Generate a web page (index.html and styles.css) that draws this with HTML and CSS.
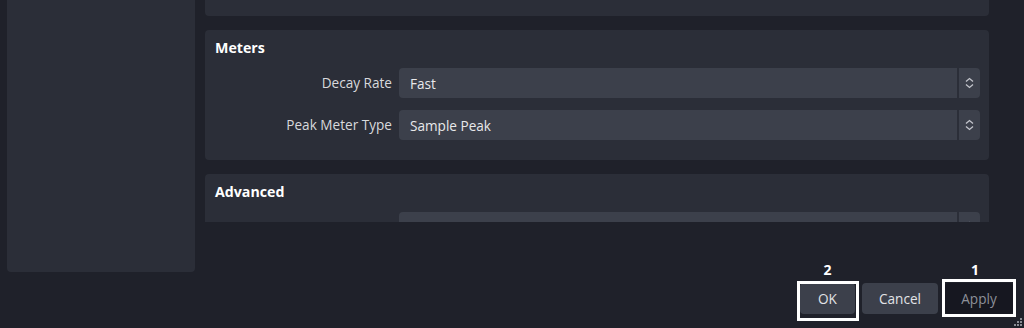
FILE: index.html
```html
<!DOCTYPE html>
<html>
<head>
<meta charset="utf-8">
<link rel="stylesheet" href="styles.css">
</head>
<body>
<div class="dialog">
  <div class="main">
    <div class="sidebar"></div>
    <div class="scroll">
      <div class="card partial"></div>
      <div class="card">
        <div class="card-title">Meters</div>
        <div class="form">
          <div class="label">Decay Rate</div>
          <div class="combo"><div class="combo-main">Fast</div><div class="combo-arrow"><svg width="9" height="12" viewBox="0 0 9 12"><path d="M1 4.5 L4.5 1.5 L8 4.5 M1 7.5 L4.5 10.5 L8 7.5" fill="none" stroke="#c3c5cc" stroke-width="1.3"/></svg></div></div>
          <div class="label">Peak Meter Type</div>
          <div class="combo"><div class="combo-main">Sample Peak</div><div class="combo-arrow"><svg width="9" height="12" viewBox="0 0 9 12"><path d="M1 4.5 L4.5 1.5 L8 4.5 M1 7.5 L4.5 10.5 L8 7.5" fill="none" stroke="#c3c5cc" stroke-width="1.3"/></svg></div></div>
        </div>
      </div>
      <div class="card">
        <div class="card-title">Advanced</div>
        <div class="form">
          <div class="label">Monitoring Device</div>
          <div class="combo"><div class="combo-main">Default</div><div class="combo-arrow"><svg width="9" height="12" viewBox="0 0 9 12"><path d="M1 4.5 L4.5 1.5 L8 4.5 M1 7.5 L4.5 10.5 L8 7.5" fill="none" stroke="#c3c5cc" stroke-width="1.3"/></svg></div></div>
        </div>
      </div>
    </div>
  </div>
  <div class="buttons">
    <div class="annot annot-ok">
      <button class="btn btn-ok">OK</button>
      <span class="annot-num">2</span>
    </div>
    <button class="btn btn-cancel">Cancel</button>
    <div class="annot annot-apply">
      <button class="btn btn-apply" disabled>Apply</button>
      <span class="annot-num">1</span>
    </div>
  </div>
  <svg class="grip" width="10" height="9" viewBox="0 0 10 9">
    <rect x="8" y="0" width="2" height="2" fill="#8a8c94"/>
    <rect x="5" y="3" width="2" height="2" fill="#8a8c94"/>
    <rect x="8" y="3" width="2" height="2" fill="#8a8c94"/>
    <rect x="2" y="6" width="2" height="2" fill="#8a8c94"/>
    <rect x="5" y="6" width="2" height="2" fill="#8a8c94"/>
    <rect x="8" y="6" width="2" height="2" fill="#8a8c94"/>
  </svg>
</div>
</body>
</html>
```
FILE: styles.css
```css
html, body {
  margin: 0;
  padding: 0;
}
body {
  background: #1f212a;
  font-family: "Open Sans", "Noto Sans", sans-serif;
  font-size: 13.6px;
  color: #dcdde0;
  width: 1024px;
  height: 328px;
  overflow: hidden;
}
.dialog {
  position: relative;
  width: 1024px;
  height: 328px;
}
.main {
  display: flex;
  gap: 10px;
  padding-left: 7px;
  height: 272px;
}
.sidebar {
  width: 188px;
  height: 272px;
  background: #2b2e38;
  border-radius: 0 0 4px 4px;
}
.scroll {
  width: 784px;
  height: 222px;
  overflow: hidden;
  display: flex;
  flex-direction: column;
  gap: 14px;
}
.card {
  background: #2b2e38;
  border-radius: 4px;
  padding: 8px 9px 20px 10px;
  flex-shrink: 0;
}
.card.partial {
  height: 16px;
  padding: 0;
  border-radius: 0 0 4px 4px;
}
.card-title {
  font-weight: bold;
  font-size: 14.2px;
  color: #ffffff;
  line-height: 20px;
  height: 20px;
  margin-bottom: 10px;
}
.form {
  display: grid;
  grid-template-columns: 177px 581px;
  column-gap: 7px;
  row-gap: 12px;
  align-items: center;
}
.label {
  text-align: right;
  color: #d8d9dc;
  line-height: 18px;
}
.combo {
  display: flex;
  height: 30px;
}
.combo-main {
  flex: 1;
  background: #3c404b;
  border-radius: 4px 0 0 4px;
  padding-left: 11px;
  display: flex;
  align-items: center;
  color: #e8e8ea;
}
.combo-arrow {
  width: 21px;
  margin-left: 2px;
  background: #3c404b;
  border-radius: 0 4px 4px 0;
  display: flex;
  align-items: center;
  justify-content: center;
}
.buttons {
  display: flex;
  justify-content: flex-end;
  align-items: flex-start;
  gap: 7px;
  padding: 11px 11px 0 0;
}
.btn {
  font-family: "Open Sans", "Noto Sans", sans-serif;
  font-size: 13.6px;
  height: 31px;
  border: none;
  border-radius: 4px;
  background: #3c404b;
  color: #e2e3e6;
  padding: 0;
}
.btn-ok { width: 55px; }
.btn-cancel { width: 76px; }
.btn-apply {
  width: 68px;
  background: #161720;
  color: #8d9099;
}
.annot {
  position: relative;
  display: flex;
}
.annot::after {
  content: "";
  position: absolute;
  border: 3px solid #ffffff;
  pointer-events: none;
}
.annot-ok::after {
  left: -3px;
  right: -4px;
  top: -2px;
  bottom: -7px;
}
.annot-apply::after {
  left: -3px;
  right: -3px;
  top: -4px;
  bottom: -3px;
}
.annot-num {
  position: absolute;
  left: 0;
  right: 0;
  text-align: center;
  font-weight: bold;
  color: #ffffff;
  font-size: 14px;
  line-height: 16px;
}
.annot-ok .annot-num { top: -21px; }
.annot-apply .annot-num { top: -21px; left: -8px; }
.grip {
  position: absolute;
  right: 2px;
  bottom: 1px;
}
```
